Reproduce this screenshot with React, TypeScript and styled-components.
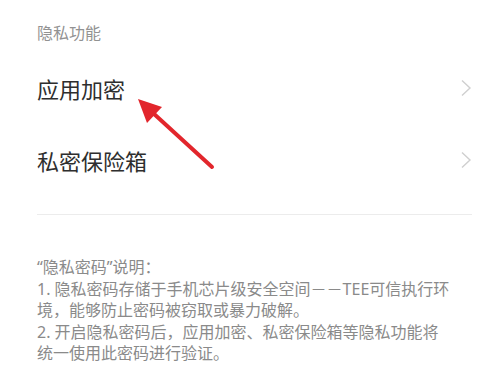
import React from "react";
import styled, { createGlobalStyle } from "styled-components";

const Global = createGlobalStyle`
  html, body { margin: 0; padding: 0; background: #ffffff; }
  body { font-family: "Noto Sans CJK SC", "Noto Sans", sans-serif; }
`;

const Page = styled.div`
  position: relative;
  width: 500px;
  height: 375px;
  overflow: hidden;
  background: #fff;
  padding: 0 28px 0 37px;
  box-sizing: border-box;
`;

const SectionTitle = styled.div`
  padding-top: 21px;
  padding-bottom: 9px;
  height: 22px;
  line-height: 22px;
  font-size: 16px;
  color: #929292;
`;

const Row = styled.div`
  height: 72px;
  display: flex;
  align-items: center;
  justify-content: space-between;
`;

const RowLabel = styled.span`
  font-size: 22px;
  color: #2e2e2e;
  line-height: 30px;
`;

const Divider = styled.div`
  margin-top: 18px;
  height: 1px;
  background: #ececec;
`;

const Notes = styled.div`
  margin-top: 42px;
  font-family: "Noto Sans", "Noto Sans CJK SC", sans-serif;
  font-size: 16px;
  line-height: 21.5px;
  color: #8a8a8a;
`;

const NoteLine = styled.div`
  white-space: nowrap;
  height: 21.5px;
`;

const Arrow = styled.svg`
  position: absolute;
  left: 0;
  top: 0;
  pointer-events: none;
`;

const Chevron = () => (
  <svg width="12" height="18" viewBox="0 0 12 18">
    <path d="M2 1.5 L10 9 L2 16.5" fill="none" stroke="#cfcfcf" strokeWidth="1.4" />
  </svg>
);

export default function App() {
  return (
    <>
      <Global />
      <Page>
        <SectionTitle>隐私功能</SectionTitle>
        <Row>
          <RowLabel>应用加密</RowLabel>
          <Chevron />
        </Row>
        <Row>
          <RowLabel>私密保险箱</RowLabel>
          <Chevron />
        </Row>
        <Divider />
        <Notes>
          <NoteLine>“隐私密码”说明：</NoteLine>
          <NoteLine>1. 隐私密码存储于手机芯片级安全空间－－TEE可信执行环</NoteLine>
          <NoteLine>境，能够防止密码被窃取或暴力破解。</NoteLine>
          <NoteLine>2. 开启隐私密码后，应用加密、私密保险箱等隐私功能将</NoteLine>
          <NoteLine>统一使用此密码进行验证。</NoteLine>
        </Notes>
        <Arrow width="500" height="375" viewBox="0 0 500 375">
          <line x1="153" y1="113" x2="212" y2="167" stroke="#e2262c" strokeWidth="4" strokeLinecap="round" />
          <polygon points="138,99 162,107 147,123" fill="#e2262c" />
        </Arrow>
      </Page>
    </>
  );
}
